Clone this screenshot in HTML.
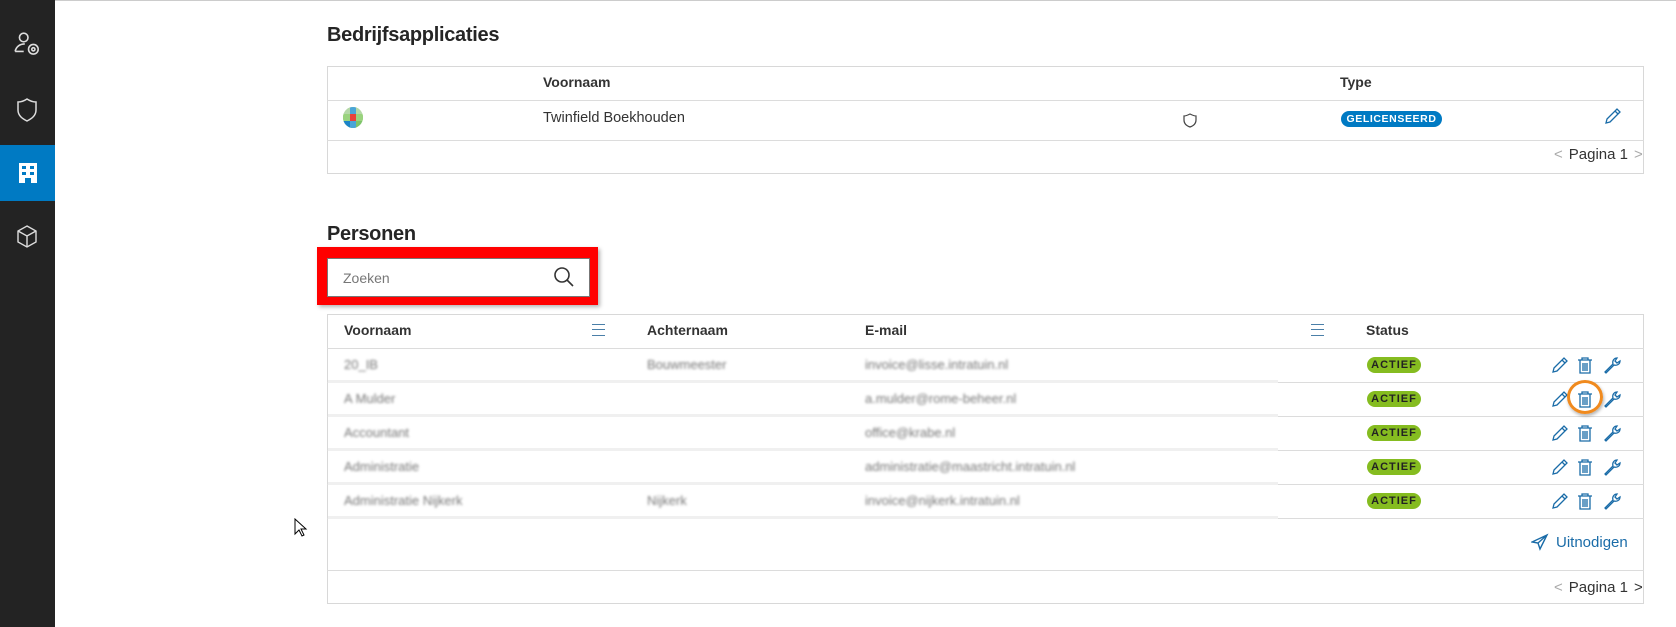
<!DOCTYPE html>
<html><head><meta charset="utf-8"><style>
body{margin:0;width:1676px;height:627px;background:#fff;font-family:"Liberation Sans",sans-serif;color:#252525;position:relative;overflow:hidden}
.a{position:absolute}
.side{left:0;top:0;width:55px;height:627px;background:#232323}
.box{border:1px solid #d8d8d8;box-sizing:border-box}
.h{font-size:20px;font-weight:bold;letter-spacing:-0.3px}
.th{font-size:14px;font-weight:bold;color:#333}
.td{font-size:14px;color:#444}
.bl{font-size:13px;color:#777;filter:blur(1.2px)}
.badge{font-size:11px;font-weight:bold;letter-spacing:1px;border-radius:9px;height:16px;line-height:16px;text-align:center}
.line{height:1px;background:#dcdcdc}
.pg{font-size:15px;color:#333;white-space:nowrap}
.pg span{display:inline-block;margin:0 6px}
</style></head><body>
<div class="a" style="left:0;top:0;width:1676px;height:1px;background:#ccc"></div>
<div class="a side"></div>
<div class="a" style="left:0;top:145px;width:55px;height:56px;background:#007ac3"></div>
<svg class="a" style="left:13px;top:30px" width="30" height="30" viewBox="0 0 28 28" fill="none" stroke="#ddd" stroke-width="1.5"><circle cx="10" cy="7" r="4"/><path d="M2 20c1-5 5-7 9-7"/><path d="M2 20h8"/><circle cx="19" cy="18" r="4.5"/><circle cx="19" cy="18" r="1.5"/></svg>
<svg class="a" style="left:15px;top:97px" width="24" height="26" viewBox="0 0 24 26" fill="none" stroke="#ddd" stroke-width="1.5"><path d="M12 2c3 2 6 3 9 3v8c0 6-5 9-9 11-4-2-9-5-9-11V5c3 0 6-1 9-3z"/></svg>
<svg class="a" style="left:18px;top:162px" width="20" height="22" viewBox="0 0 20 22"><path d="M1 1h18v20h-6v-5h-6v5H1z" fill="#fff"/><g fill="#007ac3"><rect x="4" y="4" width="4" height="3"/><rect x="12" y="4" width="4" height="3"/><rect x="4" y="10" width="4" height="3"/><rect x="12" y="10" width="4" height="3"/></g></svg>
<svg class="a" style="left:15px;top:224px" width="24" height="26" viewBox="0 0 24 26" fill="none" stroke="#ddd" stroke-width="1.4"><path d="M12 2l9 5v11l-9 5-9-5V7z"/><path d="M3 7l9 5 9-5M12 12v11"/></svg>

<div class="a h" style="left:327px;top:24px">Bedrijfsapplicaties</div>
<div class="a box" style="left:327px;top:66px;width:1317px;height:108px"></div>
<div class="a line" style="left:327px;top:100px;width:1317px"></div>
<div class="a line" style="left:327px;top:140px;width:1317px"></div>
<div class="a th" style="left:543px;top:74px">Voornaam</div>
<div class="a th" style="left:1340px;top:74px">Type</div>
<svg class="a" style="left:343px;top:107px" width="20" height="21" viewBox="0 0 20 21"><defs><clipPath id="cl"><ellipse cx="10" cy="10.5" rx="10" ry="10.5"/></clipPath></defs><g clip-path="url(#cl)"><rect width="20" height="21" fill="#7ec46a"/><rect x="0" y="0" width="20" height="7" fill="#b5d8a8"/><rect x="7" y="0" width="6" height="21" fill="#4aa5d8"/><rect x="0" y="7" width="20" height="7" fill="#9ad37e"/><rect x="7" y="7" width="6" height="7" fill="#e8413b"/><rect x="0" y="14" width="7" height="7" fill="#1b84c8"/></g></svg>
<div class="a td" style="left:543px;top:110px;font-size:14.5px;color:#333">Twinfield Boekhouden</div>
<svg class="a" style="left:1183px;top:113px" width="14" height="15" viewBox="0 0 14 15" fill="none" stroke="#444" stroke-width="1.2"><path d="M7 1c2 1 4 2 6 2v4c0 4-3 6-6 7-3-1-6-3-6-7V3c2 0 4-1 6-2z"/></svg>
<div class="a badge" style="left:1341px;top:111px;width:101px;background:#007ac3;color:#fff;letter-spacing:0.6px;font-size:10.5px">GELICENSEERD</div>
<svg class="a" style="left:1604px;top:107px" width="18" height="18" viewBox="0 0 18 18" fill="none" stroke="#1a6ca8" stroke-width="1.3"><path d="M2 16l1-4L13 2l3 3L6 15z M11 4l3 3"/></svg>
<div class="a pg" style="left:1554px;top:146px"><span style="color:#aaa;margin-left:0">&lt;</span>Pagina 1<span style="color:#aaa">&gt;</span></div>

<div class="a h" style="left:327px;top:223px">Personen</div>
<div class="a" style="left:317px;top:247px;width:281px;height:58px;background:#f00;box-shadow:2px 2px 4px rgba(0,0,0,.3)"></div>
<div class="a" style="left:327px;top:258px;width:263px;height:39px;background:#fff;border:1px solid #777;box-sizing:border-box"></div>
<div class="a td" style="left:343px;top:270px;color:#777">Zoeken</div>
<svg class="a" style="left:553px;top:266px" width="22" height="22" viewBox="0 0 22 22" fill="none" stroke="#333" stroke-width="1.6"><circle cx="9" cy="9" r="7"/><path d="M14 14l6 6"/></svg>

<div class="a box" style="left:327px;top:314px;width:1317px;height:290px"></div>
<div class="a line" style="left:327px;top:348px;width:1317px"></div>
<div class="a th" style="left:344px;top:322px">Voornaam</div>
<div class="a" style="left:592px;top:324px;width:13px;height:12px;border-top:1.5px solid #4a7fa8;border-bottom:1.5px solid #4a7fa8;box-sizing:border-box"><div style="margin-top:3.5px;height:1.5px;background:#4a7fa8"></div></div>
<div class="a th" style="left:647px;top:322px">Achternaam</div>
<div class="a th" style="left:865px;top:322px">E-mail</div>
<div class="a" style="left:1311px;top:324px;width:13px;height:12px;border-top:1.5px solid #4a7fa8;border-bottom:1.5px solid #4a7fa8;box-sizing:border-box"><div style="margin-top:3.5px;height:1.5px;background:#4a7fa8"></div></div>
<div class="a th" style="left:1366px;top:322px">Status</div>

<div class="a line" style="left:327px;top:382px;width:1317px"></div>
<div class="a line" style="left:327px;top:416px;width:1317px"></div>
<div class="a line" style="left:327px;top:450px;width:1317px"></div>
<div class="a line" style="left:327px;top:484px;width:1317px"></div>
<div class="a line" style="left:327px;top:518px;width:1317px"></div>
<div class="a line" style="left:327px;top:570px;width:1317px"></div>
<div class="a" style="left:328px;top:380px;width:950px;height:3px;background:#f0f0f0"></div>
<div class="a" style="left:328px;top:414px;width:950px;height:3px;background:#f0f0f0"></div>
<div class="a" style="left:328px;top:448px;width:950px;height:3px;background:#f0f0f0"></div>
<div class="a" style="left:328px;top:482px;width:950px;height:3px;background:#f0f0f0"></div>
<div class="a" style="left:328px;top:516px;width:950px;height:3px;background:#f0f0f0"></div>

<div class="a bl" style="left:344px;top:357px">20_IB</div>
<div class="a bl" style="left:647px;top:357px">Bouwmeester</div>
<div class="a bl" style="left:865px;top:357px">invoice@lisse.intratuin.nl</div>
<div class="a bl" style="left:344px;top:391px">A Mulder</div>
<div class="a bl" style="left:865px;top:391px">a.mulder@rome-beheer.nl</div>
<div class="a bl" style="left:344px;top:425px">Accountant</div>
<div class="a bl" style="left:865px;top:425px">office@krabe.nl</div>
<div class="a bl" style="left:344px;top:459px">Administratie</div>
<div class="a bl" style="left:865px;top:459px">administratie@maastricht.intratuin.nl</div>
<div class="a bl" style="left:344px;top:493px">Administratie Nijkerk</div>
<div class="a bl" style="left:647px;top:493px">Nijkerk</div>
<div class="a bl" style="left:865px;top:493px">invoice@nijkerk.intratuin.nl</div>

<div class="a badge" style="left:1367px;top:357px;width:54px;background:#85bc20;color:#222">ACTIEF</div>
<div class="a badge" style="left:1367px;top:391px;width:54px;background:#85bc20;color:#222">ACTIEF</div>
<div class="a badge" style="left:1367px;top:425px;width:54px;background:#85bc20;color:#222">ACTIEF</div>
<div class="a badge" style="left:1367px;top:459px;width:54px;background:#85bc20;color:#222">ACTIEF</div>
<div class="a badge" style="left:1367px;top:493px;width:54px;background:#85bc20;color:#222">ACTIEF</div>

<svg width="0" height="0" style="position:absolute"><defs>
<g id="ic" fill="none" stroke="#1a6ca8" stroke-width="1.3">
<path d="M2 16l1-4L13 2l3 3L6 15z M11 4l3 3"/>
<g transform="translate(26,0)"><path d="M1 4h14M5 4V2h6v2M3 4v13h10V4M6 7v8M8 7v8M10 7v8"/></g>
<g transform="translate(52,0)"><path d="M2 16l8-8c-1-3 1-6 4-6l-2 3 2 2 3-2c0 3-3 5-6 4l-8 8z"/></g>
</g></defs></svg>
<svg class="a" style="left:1551px;top:356px" width="72" height="20"><use href="#ic"/></svg>
<svg class="a" style="left:1551px;top:390px" width="72" height="20"><use href="#ic"/></svg>
<svg class="a" style="left:1551px;top:424px" width="72" height="20"><use href="#ic"/></svg>
<svg class="a" style="left:1551px;top:458px" width="72" height="20"><use href="#ic"/></svg>
<svg class="a" style="left:1551px;top:492px" width="72" height="20"><use href="#ic"/></svg>
<div class="a" style="left:1567px;top:380px;width:36px;height:34px;border:3px solid #f08a1e;border-radius:50%;box-sizing:border-box;box-shadow:1px 2px 3px rgba(0,0,0,.3)"></div>

<svg class="a" style="left:1531px;top:533px" width="18" height="18" viewBox="0 0 18 18" fill="none" stroke="#1a6ca8" stroke-width="1.4"><path d="M16 2L1 9l6 1 2 6z M7 10l9-8"/></svg>
<div class="a td" style="left:1556px;top:534px;font-size:15px;color:#1a6ca8">Uitnodigen</div>
<div class="a pg" style="left:1554px;top:579px"><span style="color:#aaa;margin-left:0">&lt;</span>Pagina 1<span style="color:#333">&gt;</span></div>

<svg class="a" style="left:294px;top:518px" width="14" height="20" viewBox="0 0 14 20"><path d="M1 1v15l4-4 3 6 2-1-3-6h5z" fill="#fff" stroke="#000" stroke-width="1"/></svg>
</body></html>
